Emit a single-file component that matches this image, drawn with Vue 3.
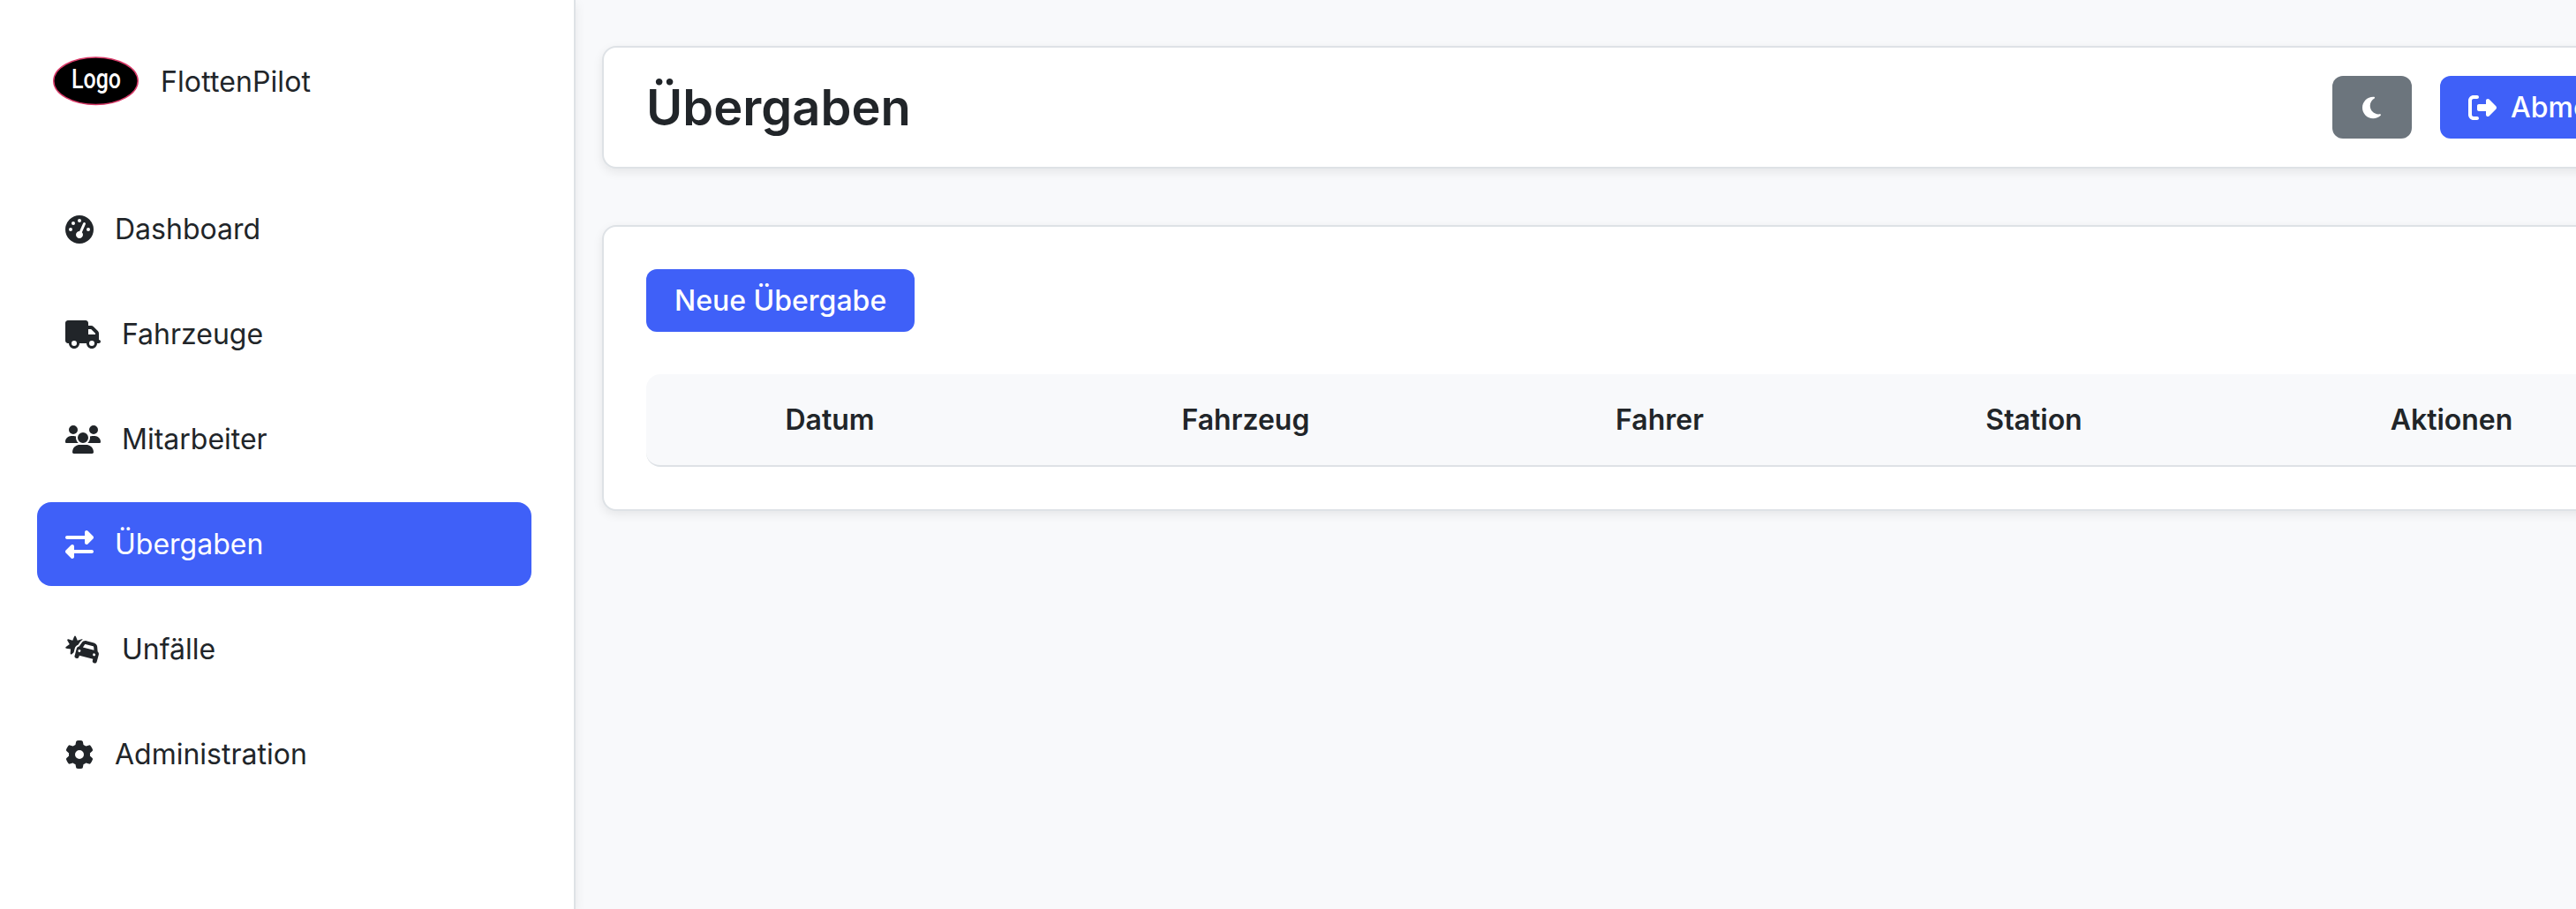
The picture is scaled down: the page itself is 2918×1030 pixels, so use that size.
<template>
  <div class="layout">
    <aside class="sidebar">
      <div class="brand">
        <svg class="brand-logo" viewBox="0 0 97 56">
          <ellipse cx="48.5" cy="27.7" rx="47.7" ry="26.8" />
          <text x="49" y="36.3" textLength="56" lengthAdjust="spacingAndGlyphs">Logo</text>
        </svg>
        <span class="brand-name">FlottenPilot</span>
      </div>

      <nav class="nav">
        <a
          v-for="item in navItems"
          :key="item.label"
          class="nav-link"
          :class="{ active: item.label === current }"
          @click="current = item.label"
        >
          <svg class="icon" :class="{ wide: item.wide }" :viewBox="item.wide ? '0 0 640 512' : '0 0 512 512'">
            <path :d="item.icon" />
          </svg>
          <span>{{ item.label }}</span>
        </a>
      </nav>
    </aside>

    <main class="content">
      <header class="card page-header">
        <h1>Übergaben</h1>
        <div class="header-actions">
          <button class="btn btn-secondary">
            <svg class="icon-moon" viewBox="0 0 384 512"><path :d="moonIcon" /></svg>
          </button>
          <button class="btn btn-primary">
            <svg class="icon" viewBox="0 0 512 512"><path :d="logoutIcon" /></svg>
            <span>Abmelden</span>
          </button>
        </div>
      </header>

      <section class="card table-card">
        <button class="btn btn-primary">Neue Übergabe</button>
        <div class="table-head">
          <div v-for="col in columns" :key="col">{{ col }}</div>
        </div>
      </section>
    </main>
  </div>
</template>

<script setup>
import { ref } from 'vue'

const current = ref('Übergaben')

const columns = ['Datum', 'Fahrzeug', 'Fahrer', 'Station', 'Aktionen']

const navItems = [
  {
    label: 'Dashboard',
    icon: 'M0 256a256 256 0 1 1 512 0A256 256 0 1 1 0 256zM288 96a32 32 0 1 0 -64 0 32 32 0 1 0 64 0zM256 416c35.3 0 64-28.7 64-64c0-17.4-6.9-33.1-18.1-44.6L366 161.7c5.3-12.1-.2-26.3-12.3-31.6s-26.3 .2-31.6 12.3L257.9 288c-.6 0-1.3 0-1.9 0c-35.3 0-64 28.7-64 64s28.7 64 64 64zM176 144a32 32 0 1 0 -64 0 32 32 0 1 0 64 0zM96 288a32 32 0 1 0 0-64 32 32 0 1 0 0 64zm352-32a32 32 0 1 0 -64 0 32 32 0 1 0 64 0z'
  },
  {
    label: 'Fahrzeuge',
    wide: true,
    icon: 'M48 0C21.5 0 0 21.5 0 48V368c0 26.5 21.5 48 48 48H64c0 53 43 96 96 96s96-43 96-96H384c0 53 43 96 96 96s96-43 96-96h32c17.7 0 32-14.3 32-32s-14.3-32-32-32V288 256 237.3c0-17-6.7-33.3-18.700-45.300L512 114.700c-12-12-28.300-18.700-45.300-18.700H416V48c0-26.500-21.500-48-48-48H48zM416 160h50.700L544 237.300V256H416V160zM112 416a48 48 0 1 1 96 0 48 48 0 1 1 -96 0zm368-48a48 48 0 1 1 0 96 48 48 0 1 1 0-96z'
  },
  {
    label: 'Mitarbeiter',
    wide: true,
    icon: 'M144 0a80 80 0 1 1 0 160A80 80 0 1 1 144 0zM512 0a80 80 0 1 1 0 160A80 80 0 1 1 512 0zM0 298.7C0 239.8 47.8 192 106.7 192h42.7c15.9 0 31 3.5 44.6 9.7c-1.3 7.2-1.9 14.7-1.9 22.3c0 38.2 16.8 72.5 43.3 96c-.2 0-.4 0-.7 0H21.3C9.6 320 0 310.4 0 298.7zM405.3 320c-.2 0-.4 0-.7 0c26.6-23.5 43.3-57.8 43.3-96c0-7.6-.7-15-1.9-22.3c13.6-6.3 28.7-9.7 44.6-9.7h42.7C592.2 192 640 239.8 640 298.7c0 11.8-9.6 21.3-21.3 21.3H405.3zM224 224a96 96 0 1 1 192 0 96 96 0 1 1 -192 0zM128 485.3C128 411.7 187.7 352 261.3 352H378.7C452.3 352 512 411.7 512 485.3c0 14.7-11.9 26.7-26.7 26.7H154.7c-14.7 0-26.7-11.9-26.7-26.7z'
  },
  {
    label: 'Übergaben',
    icon: 'M32 96l320 0V32c0-12.9 7.8-24.6 19.8-29.6s25.7-2.2 34.9 6.9l96 96c6 6 9.4 14.1 9.4 22.6s-3.4 16.6-9.4 22.6l-96 96c-9.2 9.2-22.9 11.9-34.9 6.9s-19.8-16.6-19.8-29.6V160L32 160c-17.7 0-32-14.3-32-32s14.3-32 32-32zM480 352c17.7 0 32 14.3 32 32s-14.3 32-32 32H160v64c0 12.9-7.8 24.6-19.8 29.6s-25.7 2.2-34.9-6.9l-96-96c-6-6-9.4-14.1-9.4-22.6s3.4-16.6 9.4-22.6l96-96c9.2-9.2 22.9-11.9 34.9-6.9s19.8 16.6 19.8 29.6l0 64H480z'
  },
  {
    label: 'Unfälle',
    wide: true,
    icon: 'M176 8c-6.6 0-12.4 4-14.9 10.1l-29.4 74L55.6 68.9c-6.3-1.9-13.1 .2-17.2 5.3s-4.6 12.2-1.4 17.9l39.5 69.1L10.9 206.4c-5.4 3.7-8 10.3-6.5 16.7s6.7 11.2 13.1 12.2l78.7 12.2L90.6 327c-.5 6.5 3.1 12.7 9 15.5s12.9 1.8 17.8-2.6l35.3-32.5 9.5-35.4 10.4-38.6c8-29.9 30.5-52.1 57.9-60.9l41-59.2c11.3-16.3 26.4-28.9 43.5-37.2c-.4-.6-.8-1.2-1.3-1.8c-4.1-5.1-10.9-7.2-17.2-5.3L220.3 92.1l-29.4-74C188.4 12 182.6 8 176 8zM367.7 161.5l135.6 36.3c6.5 1.8 11.3 7.4 11.8 14.2l4.6 56.5-201.5-54 32.2-46.6c3.8-5.6 10.8-8.1 17.3-6.4zm-69.9-30l-47.9 69.3c-21.6 3-40.3 18.6-46.3 41l-10.4 38.6-16.6 61.8-8.3 30.9c-4.6 17.1 5.6 34.6 22.6 39.2l15.5 4.1c17.1 4.6 34.6-5.6 39.2-22.6l8.3-30.9 247.3 66.3-8.3 30.9c-4.6 17.1 5.6 34.6 22.6 39.2l15.5 4.1c17.1 4.6 34.6-5.6 39.2-22.6l8.3-30.9L595 388l10.4-38.6c6-22.4-2.5-45.2-19.6-58.7l-6.8-84c-2.7-33.7-26.4-62-59-70.8L384.2 99.7c-32.7-8.8-67.3 4-86.5 31.8zM261 255.8a24 24 0 1 1 -12.4 46.4A24 24 0 1 1 261 255.8zM498.6 343.9a24 24 0 1 1 46.4 12.4 24 24 0 1 1 -46.4-12.4z'
  },
  {
    label: 'Administration',
    icon: 'M495.9 166.6c3.2 8.7 .5 18.4-6.4 24.6l-43.3 39.4c1.1 8.3 1.7 16.8 1.7 25.4s-.6 17.1-1.7 25.4l43.3 39.4c6.9 6.2 9.6 15.9 6.4 24.6c-4.4 11.9-9.7 23.3-15.8 34.3l-4.7 8.1c-6.6 11-14 21.4-22.1 31.2c-5.9 7.2-15.7 9.6-24.5 6.8l-55.7-17.7c-13.4 10.3-28.2 18.9-44 25.4l-12.5 57.1c-2 9.1-9 16.3-18.2 17.8c-13.8 2.3-28 3.5-42.5 3.5s-28.7-1.2-42.5-3.5c-9.2-1.5-16.2-8.7-18.2-17.8l-12.5-57.1c-15.8-6.5-30.6-15.1-44-25.4L83.1 425.9c-8.8 2.8-18.6 .3-24.5-6.8c-8.1-9.8-15.5-20.2-22.1-31.2l-4.7-8.1c-6.1-11-11.4-22.4-15.8-34.3c-3.2-8.7-.5-18.4 6.4-24.6l43.3-39.4C64.6 273.1 64 264.6 64 256s.6-17.1 1.7-25.4L22.4 191.2c-6.9-6.2-9.6-15.9-6.4-24.6c4.4-11.9 9.7-23.3 15.8-34.3l4.7-8.1c6.6-11 14-21.4 22.1-31.2c5.9-7.2 15.7-9.6 24.5-6.8l55.7 17.7c13.4-10.3 28.2-18.9 44-25.4l12.5-57.1c2-9.1 9-16.3 18.2-17.8C227.3 1.2 241.5 0 256 0s28.7 1.2 42.5 3.5c9.2 1.5 16.2 8.7 18.2 17.8l12.5 57.1c15.8 6.5 30.6 15.1 44 25.4l55.7-17.7c8.8-2.8 18.6-.3 24.5 6.8c8.1 9.8 15.5 20.2 22.1 31.2l4.7 8.1c6.1 11 11.4 22.4 15.8 34.3zM256 336a80 80 0 1 0 0-160 80 80 0 1 0 0 160z'
  }
]

const moonIcon = 'M223.5 32C100 32 0 132.3 0 256S100 480 223.5 480c60.6 0 115.5-24.2 155.8-63.4c5-4.9 6.3-12.5 3.1-18.7s-10.1-9.7-17-8.5c-9.8 1.7-19.8 2.6-30.1 2.6c-96.9 0-175.5-78.8-175.5-176c0-65.8 36-123.1 89.3-153.3c6.1-3.5 9.2-10.5 7.7-17.3s-7.3-11.9-14.3-12.5c-6.3-.5-12.6-.8-19-.8z'
const logoutIcon = 'M377.9 105.9L500.7 228.7c7.2 7.2 11.3 17.1 11.3 27.3s-4.1 20.1-11.3 27.3L377.9 406.1c-6.4 6.4-15 9.9-24 9.9c-18.7 0-33.9-15.2-33.9-33.9l0-62.1-128 0c-17.7 0-32-14.3-32-32l0-64c0-17.7 14.3-32 32-32l128 0 0-62.1c0-18.7 15.2-33.9 33.9-33.9c9 0 17.6 3.6 24 9.9zM160 96L96 96c-17.7 0-32 14.3-32 32l0 256c0 17.7 14.3 32 32 32l64 0c17.7 0 32 14.3 32 32s-14.3 32-32 32l-64 0c-53 0-96-43-96-96L0 128C0 75 43 32 96 32l64 0c17.7 0 32 14.3 32 32s-14.3 32-32 32z'
</script>

<style>
body {
  background-color: #f8f9fb;
  overflow: hidden;
}
</style>

<style scoped>
.layout {
  display: flex;
  height: 100vh;
  overflow: hidden;
  font-family: Inter, "Liberation Sans", sans-serif;
  font-size: 32px;
  line-height: 47px;
  color: #212529;
}

.sidebar {
  flex: 0 0 652px;
  box-sizing: border-box;
  padding: 60px 48px 0 42px;
  background-color: #fff;
  border-right: 2px solid #dee2e6;
  box-shadow: 0 4px 12px rgba(0, 0, 0, 0.08);
}

.brand {
  display: flex;
  align-items: center;
  gap: 25px;
  height: 64px;
  margin-bottom: 88px;
  padding-left: 18px;
}

.brand-logo {
  width: 97px;
  height: 56px;
}

.brand-logo ellipse {
  fill: #000;
  stroke: #d83a68;
  stroke-width: 1.5;
}

.brand-logo text {
  fill: #fff;
  font-family: Roboto, sans-serif;
  font-size: 31px;
  font-weight: 500;
  text-anchor: middle;
}

.brand-name {
  letter-spacing: 0.1px;
}

.nav {
  display: flex;
  flex-direction: column;
  gap: 24px;
}

.nav-link {
  display: flex;
  align-items: center;
  gap: 24px;
  height: 95px;
  box-sizing: border-box;
  padding: 0 32px;
  border-radius: 16px;
  cursor: pointer;
}

.nav-link.active {
  background-color: #3f60f8;
  color: #fff;
}

.icon {
  width: 32px;
  height: 32px;
  fill: currentColor;
}

.icon.wide {
  width: 40px;
}

.icon-moon {
  width: 21px;
  height: 28px;
  fill: currentColor;
}

/* wider than the visible area, the right side runs off screen */
.content {
  flex: 0 0 2460px;
  box-sizing: border-box;
  padding: 52px 30px 0;
}

.card {
  box-sizing: border-box;
  background-color: #fff;
  border: 2px solid #dee2e6;
  border-radius: 16px;
  box-shadow: 0 4px 12px rgba(0, 0, 0, 0.08);
}

.page-header {
  display: flex;
  align-items: center;
  justify-content: space-between;
  height: 139px;
  margin-bottom: 64px;
  padding: 0 48px;
}

.page-header h1 {
  margin: 0;
  font-size: 56px;
  font-weight: 600;
  line-height: 68px;
}

.header-actions {
  display: flex;
  gap: 32px;
  width: 390px;
}

.btn {
  display: inline-flex;
  flex: none;
  align-items: center;
  justify-content: center;
  gap: 16px;
  height: 71px;
  padding: 0 32px;
  border: none;
  border-radius: 12px;
  color: #fff;
  font-family: inherit;
  font-size: 32px;
  font-weight: 500;
  cursor: pointer;
}

.btn-primary {
  background-color: #3f60f8;
}

.btn-secondary {
  width: 90px;
  padding: 0 34px 0 32px;
  background-color: #6c757d;
}

.table-card {
  height: 324px;
  padding: 48px;
}

.table-head {
  display: grid;
  grid-template-columns: 416px 526px 412px 436px 1fr;
  align-items: center;
  height: 105px;
  box-sizing: border-box;
  margin-top: 48px;
  border-bottom: 2px solid #dee2e6;
  border-radius: 16px;
  background-color: #f8f9fb;
  font-weight: 600;
  text-align: center;
}
</style>
